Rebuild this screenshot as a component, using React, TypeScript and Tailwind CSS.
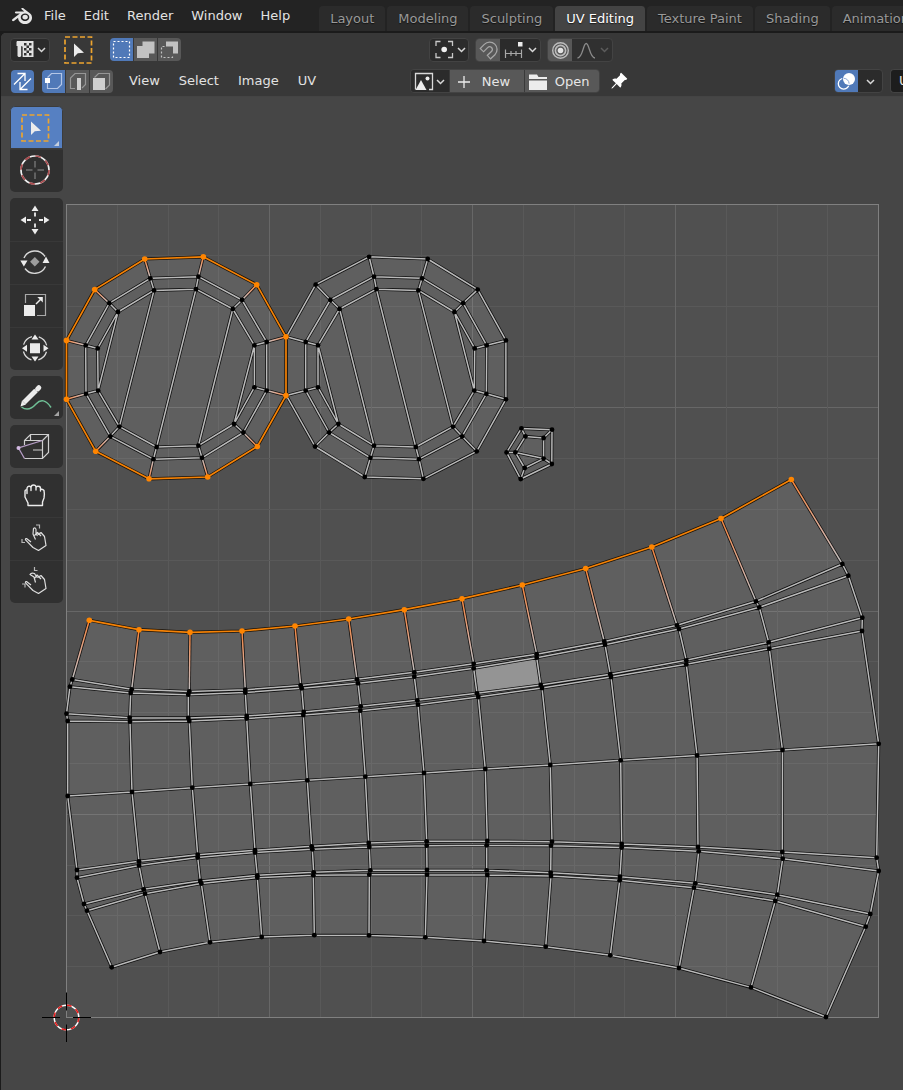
import React from "react";
import { SiBlender } from "react-icons/si";
import { BsPinAngleFill } from "react-icons/bs";

type Pt = [number, number];

/* ---------- UV mesh data (units of the canvas view box) ---------- */

const sheet: Pt[][] = [
  [[89.3, 620.3], [139, 629.7], [190, 632.3], [242, 631], [295, 626], [348.7, 619], [404.3, 609.7], [462, 598.7], [522.3, 585], [585.7, 568.5], [651.8, 547], [721, 518.5], [791.3, 479.5]],
  [[72.3, 679.5], [131.7, 689.3], [189.3, 691.5], [245.3, 689.7], [300.7, 685.5], [357, 679.3], [414.3, 672.3], [473.7, 663.8], [536.7, 654.2], [604.3, 641.5], [677, 625.3], [756, 601.3], [842.3, 564]],
  [[70, 686.7], [130.7, 693], [188.3, 694.7], [245.3, 692.5], [301.7, 688.3], [358, 683.3], [414.3, 676.7], [473.7, 668.3], [536.7, 657.7], [605, 644.7], [679, 629], [759.3, 607.3], [848.3, 575.7]],
  [[66.5, 713.7], [129.7, 717.7], [188.3, 717.9], [246.7, 716], [303.7, 712], [360.7, 706.3], [417.3, 700.3], [477, 693.3], [540.7, 685], [610.3, 674.2], [686.3, 660.3], [768.7, 642.3], [862.3, 617.7]],
  [[67.7, 721], [130, 721.7], [189.3, 721], [246.7, 718.5], [303.3, 715], [360.3, 710.7], [418, 704.7], [478.3, 697], [542, 688], [611, 677], [686.3, 664.3], [769.3, 648.7], [862, 631]],
  [[67.7, 796], [132, 792], [192.3, 787.7], [250.3, 784], [307.3, 780.3], [365.3, 776.7], [424, 773], [485.3, 769], [550.3, 765], [620.7, 760.3], [697.1, 755.5], [782.5, 750], [878.7, 743.8]],
  [[77, 870], [139, 861.3], [197.7, 854.7], [255, 850.2], [311.7, 846.3], [368.7, 843], [426.7, 841.3], [487.3, 841], [552, 841.7], [621.7, 844], [698, 847], [782.3, 852], [876.7, 857.7]],
  [[77, 877.7], [139, 865.5], [197.7, 857.5], [255, 852.5], [312.3, 849.3], [369.3, 847], [426.7, 845.7], [486.7, 845.3], [551, 845.7], [621.7, 847.5], [698.7, 851.3], [782.7, 858.7], [878.7, 871]],
  [[84, 904], [143.7, 889.3], [200.3, 881], [257.3, 875.3], [313.7, 872.3], [370.3, 870.3], [427, 870], [486.7, 870.3], [550.7, 872.7], [620, 876.7], [695.3, 883.3], [777.3, 894.7], [870.3, 914]],
  [[87, 910.7], [145, 893.7], [201.3, 883.5], [257.3, 877.7], [313.3, 875.3], [369.3, 874.7], [427, 874.7], [487.3, 875], [551, 876], [619.7, 880.3], [694, 887.7], [775.3, 901], [865.7, 926.7]],
  [[111.7, 967.3], [160, 952], [210, 942.3], [261.7, 937], [314.3, 935.2], [369, 935.4], [425.3, 937.3], [484, 941], [545.7, 946.7], [610.3, 955.3], [679, 968], [751, 987.4], [826, 1017]],
];

const outer: Pt[] = [[144.7, 259], [203.3, 256.8], [256.7, 284.7], [286, 336.8], [286, 395.6], [257.3, 446.5], [207.7, 477], [149, 478.8], [95.7, 451.3], [66.5, 399.3], [66.5, 340.4], [94.7, 289.6]];
const middle: Pt[] = [[150.3, 278.3], [198.4, 276.7], [242, 300], [266.7, 342], [266.7, 390.6], [243.3, 432.5], [202, 457.8], [153.4, 459.2], [110.3, 436.3], [86, 393.8], [85.7, 345.3], [109.3, 303.2]];
const inner: Pt[] = [[154, 290.4], [196, 289.2], [232.8, 309], [254.4, 345.3], [254.4, 387.3], [234, 424], [198.4, 445.7], [156.6, 447], [119.4, 426.6], [98.1, 390.6], [97.7, 348.4], [118, 312]];
const chords: [number, number][] = [[11, 9], [0, 8], [1, 7], [2, 6], [3, 5]];

const mirror = (ring: Pt[]): Pt[] => ring.map(([x, y]) => [572.4 - x, y]);
const capOuter = mirror(outer);
const capMiddle = mirror(middle);
const capInner = mirror(inner);

const gemOuter: Pt[] = [[521.4, 428.4], [552, 429.7], [551.8, 464], [520.7, 479], [506.6, 452.4]];
const gemInner: Pt[] = [[525.4, 436.4], [543.6, 438], [543.6, 458.6], [524.7, 468], [515.4, 452.4]];

const path = (pts: Pt[], close = false) => "M" + pts.map((p) => p.join(" ")).join("L") + (close ? "Z" : "");
const seg = (a: Pt, b: Pt) => path([a, b]);

const plain: string[] = [
  ...sheet.slice(1).map((r) => path(r)),
  ...sheet[0].map((_, c) => path(sheet.slice(1).map((r) => r[c]))),
  path(middle, true),
  path(inner, true),
  ...middle.map((p, i) => seg(p, inner[i])),
  ...chords.map(([a, b]) => seg(inner[a], inner[b])),
  path(capOuter, true),
  path(capMiddle, true),
  path(capInner, true),
  ...capMiddle.map((p, i) => seg(p, capInner[i])),
  ...capOuter.map((p, i) => seg(p, capMiddle[i])),
  ...chords.map(([a, b]) => seg(capInner[a], capInner[b])),
  path(gemOuter, true),
  path(gemInner, true),
  ...gemOuter.map((p, i) => seg(p, gemInner[i])),
  seg(gemInner[4], gemInner[2]),
];
const plainPath = plain.join("");

const faded: [Pt, Pt][] = [
  ...sheet[0].map((p, c): [Pt, Pt] => [p, sheet[1][c]]),
  ...outer.map((p, i): [Pt, Pt] => [p, middle[i]]),
];
const fadedPath = faded.map(([a, b]) => seg(a, b)).join("");
const selectedPath = path(sheet[0]) + path(outer, true);

const outline: Pt[] = [
  ...sheet[0],
  ...sheet.slice(1).map((r) => r[12]),
  ...[...sheet[10]].reverse(),
  ...sheet.slice(1, 10).map((r) => r[0]).reverse(),
];

const darkDots: Pt[] = [
  ...sheet.slice(1).flat(), ...middle, ...inner, ...capOuter, ...capMiddle, ...capInner, ...gemOuter, ...gemInner,
];
const hotDots: Pt[] = [...sheet[0], ...outer];

const divisions = Array.from({ length: 15 }, (_, i) => i + 1);

function UVCanvas() {
  return (
    <svg viewBox="1 97 902 993" className="block h-auto w-full [grid-area:1/1]" role="img" aria-label="UV layout">
      <rect x="66.5" y="204.5" width="812" height="813" fill="#505050" />
      {divisions.map((i) => (
        <path
          key={i}
          d={`M${Math.floor(66.5 + i * 50.75) + 0.5} 205V1017M67 ${Math.round(204 + i * 50.82) + 0.5}H878`}
          stroke={i % 4 === 0 ? "#676767" : "#595959"}
        />
      ))}
      <g fill="#fff" fillOpacity=".09">
        <path d={path(outline, true)} />
        <path d={path(outer, true)} />
        <path d={path(capOuter, true)} />
        <path d={path(gemOuter, true)} />
      </g>
      <path d={path([sheet[2][7], sheet[2][8], sheet[3][8], sheet[3][7]], true)} fill="#949494" />
      <rect x="66.5" y="204.5" width="812" height="813" fill="none" stroke="#808080" />

      <defs>
        {faded.map(([a, b], i) => (
          <linearGradient key={i} id={`edge${i}`} gradientUnits="userSpaceOnUse" x1={a[0]} y1={a[1]} x2={b[0]} y2={b[1]}>
            <stop offset="0" stopColor="#f5833a" />
            <stop offset=".6" stopColor="#dcae9c" />
            <stop offset="1" stopColor="#bcbcbc" />
          </linearGradient>
        ))}
      </defs>
      <g fill="none" strokeLinejoin="round">
        <path d={plainPath + fadedPath} stroke="#101010" strokeWidth="3.1" />
        <path d={plainPath} stroke="#bababa" strokeWidth="1.5" />
        {faded.map(([a, b], i) => (
          <path key={i} d={seg(a, b)} stroke={`url(#edge${i})`} strokeWidth="1.5" />
        ))}
        <path d={selectedPath} stroke="#1a1208" strokeWidth="3.2" />
        <path d={selectedPath} stroke="#f58206" strokeWidth="1.7" />
      </g>
      {darkDots.map(([x, y], i) => <circle key={i} cx={x} cy={y} r="2.4" fill="#000" />)}
      {hotDots.map(([x, y], i) => <circle key={i} cx={x} cy={y} r="2.8" fill="#ff8500" />)}

      <g fill="none" strokeWidth="1.5">
        <circle cx="66.5" cy="1017.5" r="12.3" stroke="#fff" />
        <circle cx="66.5" cy="1017.5" r="12.3" stroke="#e81c1c" strokeDasharray="4.83 4.83" />
        <path d="M42 1017.5H60M73 1017.5H91M66.5 992.5V1010.5M66.5 1024.5V1042" stroke="#000" strokeWidth="1" />
      </g>
    </svg>
  );
}

/* ---------- Icons ---------- */

function Glyph({ box, w, h, children }: { box: string; w: string; h: string; children: React.ReactNode }) {
  return (
    <svg viewBox={box} width={w} height={h} fill="none" className="block shrink-0" aria-hidden="true">
      {children}
    </svg>
  );
}

function Chevron({ dim = false }: { dim?: boolean }) {
  return (
    <svg viewBox="0 0 9 6" width="9" height="6" fill="none" className="block shrink-0" aria-hidden="true">
      <path d="M1 1L4.5 4.5L8 1" stroke={dim ? "#5c5c5c" : "#d8d8d8"} strokeWidth="1.5" />
    </svg>
  );
}

const selectBox = (
  <>
    <path d="M22 115H48.5V141H22Z" stroke="#eda42f" strokeWidth="1.7" strokeDasharray="5 2.5" />
    <path d="M31 121.5V135L34.8 131.3L41 130.7Z" fill="#ececec" />
  </>
);

type Tool = { name: string; box: string; art: React.ReactNode; active?: boolean };

const toolGroups: Tool[][] = [
  [
    { name: "Select Box", box: "10 106 53 43", active: true, art: <>{selectBox}<path d="M59 141V146H54Z" fill="#c5cfdf" /></> },
    {
      name: "Cursor", box: "10 149 53 43",
      art: (
        <>
          <circle cx="35" cy="170" r="14" stroke="#f0f0f0" strokeWidth="1.7" />
          <circle cx="35" cy="170" r="14" stroke="#a84a4d" strokeWidth="1.7" strokeDasharray="5.5 5.5" />
          <path d="M26 170H32.5M37.5 170H44M35 161V167.5M35 172.5V179" stroke="#909090" />
        </>
      ),
    },
  ],
  [
    {
      name: "Move", box: "10 198 53 43",
      art: (
        <>
          <path d="M35 205.5L38.5 211H31.5ZM35 234.5L38.5 229H31.5ZM20.5 220L26 216.5V223.5ZM49.5 220L44 216.5V223.5Z" fill="#ececec" />
          <path d="M35 212.5V216.5M35 223.5V227.5M27 220H31M39 220H43" stroke="#ececec" strokeWidth="1.8" />
        </>
      ),
    },
    {
      name: "Rotate", box: "10 241 53 43",
      art: (
        <>
          <path d="M24 258A12 12 0 0 1 45 256.5M45.5 266.5A12 12 0 0 1 25 268.5" stroke="#d8d8d8" strokeWidth="1.4" />
          <path d="M20.3 260.5H27.5L23.9 266.5ZM42.5 263H49.5L46 256.5Z" fill="#ececec" />
          <path d="M34.8 257L39.5 261.7L34.8 266.4L30.1 261.7Z" fill="#9c9c9c" />
        </>
      ),
    },
    {
      name: "Scale", box: "10 284 53 43",
      art: (
        <>
          <path d="M25.5 303V294.5H45.5V315.5H37" stroke="#a8a8a8" strokeWidth="1.2" />
          <path d="M24 305H35V316H24Z" fill="#ececec" />
          <path d="M36 304L40.5 299.5" stroke="#ececec" strokeWidth="1.5" />
          <path d="M42.8 297V302.5L37.3 297Z" fill="#ececec" />
        </>
      ),
    },
    {
      name: "Transform", box: "10 327 53 43",
      art: (
        <>
          <circle cx="35" cy="348.3" r="12" stroke="#d8d8d8" strokeWidth="1.3" strokeDasharray="11.85 7" strokeDashoffset="-3.5" />
          <path d="M30 343.3H40V353.3H30Z" fill="#ececec" />
          <path d="M35 334.5L38.5 339.5H31.5ZM35 361.5L38.5 356.5H31.5ZM22 348.3L27 344.8V351.8ZM48.5 348.3L43.5 344.8V351.8Z" fill="#ececec" />
        </>
      ),
    },
  ],
  [
    {
      name: "Annotate", box: "10 376 53 43",
      art: (
        <>
          <path d="M21.5 407C27 411 31.5 409 36 404S46 399.5 51 407.5" stroke="#6fbf95" strokeWidth="1.5" />
          <path d="M24 402.5L36 390.5" stroke="#ececec" strokeWidth="5" />
          <path d="M37.6 388.9L38.8 387.7" stroke="#ececec" strokeWidth="5" strokeLinecap="round" />
          <path d="M22 400.5L26 404.5L20.5 406.5Z" fill="#ececec" />
          <path d="M59 411V416H54Z" fill="#a4a4a4" />
        </>
      ),
    },
  ],
  [
    {
      name: "Rip Region", box: "10 425 53 43",
      art: (
        <>
          <path d="M24.5 445V440.5L30.5 434.5H48.5V452.5L42.5 458.5H24.5M24.5 440.5H42.5V458.5M42.5 440.5L48.5 434.5M30.5 434.5V440M33 450H42" stroke="#cfcfcf" strokeWidth="1.2" />
          <path d="M42.5 440.5L18.5 448L24.5 458.5" stroke="#b49bc4" strokeWidth="1.3" />
          <circle cx="18.5" cy="448" r="2" fill="#d3b9e2" />
        </>
      ),
    },
  ],
  [
    {
      name: "Grab", box: "10 474 53 43",
      art: (
        <path
          d="M28 505.5V503L25 497V491.5Q25 489.5 27 490V493.5V488.5Q27.3 486 29.5 486.3Q31 486.5 31 488V490.5V487.5Q31.2 485 33.5 485Q35.8 485 36 487V490V487.5Q36.8 485.8 38.5 486.3Q40.5 486.5 40.5 488.5V491V489.5Q42.5 488.5 44 490.5Q44.8 494 44 498L42.5 502V505.5Z"
          stroke="#ececec" strokeWidth="1.4" strokeLinejoin="round"
        />
      ),
    },
    {
      name: "Relax", box: "10 517 53 43",
      art: (
        <>
          <path
            d="M31 542L26.5 538.5Q25.3 538.3 25.5 539.8L33 547.5L38.5 550.5L46 545.5L44.5 536.5L41 532.5L37.5 534.5M41 536L37.5 532.5L34.5 535.5M37.5 536L36 534V529.5Q35.5 527 33.5 528.5L33 534L35.5 539.5"
            stroke="#dedede" strokeWidth="1.2" strokeLinejoin="round"
          />
          <path d="M36 525H39.5V528.5M22 539V542.5H25" stroke="#b8b8b8" strokeWidth="1.2" />
        </>
      ),
    },
    {
      name: "Pinch", box: "10 560 53 43",
      art: (
        <>
          <path
            d="M31 585L26.5 581.5Q25.3 581.3 25.5 582.8L33 590.5L38.5 593.5L46 588.5L44.5 579.5L41 575.5L37.5 577.5M41 579L37 575L34.5 578.5M37 577.5L34.5 573.5Q31 572.5 30 574.5L34 577L35.5 582.5"
            stroke="#dedede" strokeWidth="1.2" strokeLinejoin="round"
          />
          <path d="M34.5 567V570.5H37.5M22 584H25V587.5" stroke="#b8b8b8" strokeWidth="1.2" />
        </>
      ),
    },
  ],
];

/* ---------- Chrome ---------- */

const shadow = "[text-shadow:0_1px_1px_rgba(0,0,0,0.6)]";
const drop = "flex h-6 shrink-0 items-center rounded-[4px] border border-[#434343] bg-[#2b2b2b]";
const cell = "flex h-[23px] shrink-0 items-center justify-center";

function TopBar() {
  const tabs = ["Layout", "Modeling", "Sculpting", "UV Editing", "Texture Paint", "Shading", "Animation"];
  return (
    <header className="flex h-[33px] items-start overflow-hidden border-b-2 border-[#1b1b1b] bg-[#232323] pl-3">
      <button aria-label="Blender" className="mt-[6px] text-[#e6e6e6]"><SiBlender size={20} /></button>
      <nav className={`flex h-[31px] shrink-0 items-center gap-[18px] pl-3 text-[#e2e2e2] ${shadow}`}>
        {["File", "Edit", "Render", "Window", "Help"].map((m) => <button key={m}>{m}</button>)}
      </nav>
      <div className="ml-[29px] flex h-[31px] items-end gap-px" role="tablist">
        {tabs.map((t) => (
          <button
            key={t}
            role="tab"
            aria-selected={t === "UV Editing"}
            className={`h-[25px] shrink-0 rounded-t-[4px] border-r border-[#232323] px-[11px] ${shadow} ${t === "UV Editing" ? "bg-[#444444] text-white" : "bg-[#2b2b2b] text-[#999999]"}`}
          >
            {t}
          </button>
        ))}
      </div>
    </header>
  );
}

function ToolSettings() {
  return (
    <div className="flex h-[33px] items-center pl-[9px]">
      <button aria-label="Editor type" className={`${drop} w-10 gap-[2px] pl-1`}>
        <Glyph box="15 40 20 19" w="20" h="19">
          <path d="M17 41H33.5V57H22.5V47H21.5V56L20 57H18.5L17.5 56V46H16.5V42Z" fill="#e3e3e3" />
          <path d="M24 43H26.5V45.5H24ZM29 43H31.5V45.5H29ZM26.5 45.5H29V48H26.5ZM24 48H26.5V50.5H24ZM29 48H31.5V50.5H29ZM26.5 50.5H29V53H26.5ZM24 53H26.5V55.5H24ZM29 53H31.5V55.5H29Z" fill="#333" />
          <path d="M21.8 46V57" stroke="#333" />
        </Glyph>
        <Chevron />
      </button>
      <button aria-label="Active tool" className="ml-[13px] shrink-0">
        <Glyph box="20 114 30 28" w="30" h="28">{selectBox}</Glyph>
      </button>
      <div className="ml-[17px] flex gap-px overflow-hidden rounded-[4px]">
        <button aria-label="Set selection" className={`${cell} w-[23px] bg-[#5079b8]`}>
          <Glyph box="110 38 23 23" w="23" h="23">
            <path d="M113.5 41.5H129.5V57.5H113.5Z" stroke="#fff" strokeDasharray="2 2" strokeWidth="1.2" />
          </Glyph>
        </button>
        <button aria-label="Extend selection" className={`${cell} w-[23px] bg-[#585858]`}>
          <Glyph box="134 38 23 23" w="23" h="23">
            <path d="M142.5 41.5H154.5V53.5H149V58H137V46H142.5Z" fill="#c2c2c2" />
          </Glyph>
        </button>
        <button aria-label="Subtract selection" className={`${cell} w-[23px] bg-[#585858]`}>
          <Glyph box="158 38 23 23" w="23" h="23">
            <path d="M166 41.5H178V53.5H173V46.5H166Z" fill="#c2c2c2" />
            <path d="M164.5 46.5H161.5V57.5H172.5V54.5" stroke="#c2c2c2" strokeDasharray="2 2" strokeWidth="1.2" />
          </Glyph>
        </button>
      </div>
      <div className="grow-6" />
      <button aria-label="Pivot point" className={`${drop} w-10 gap-[3px] pl-1`}>
        <Glyph box="435 40 20 19" w="20" h="19">
          <path d="M441.5 41.5H437V46M449 41.5H453.500V46M437 53V57.5H441.5M453.500 53V57.5H449" stroke="#c8c8c8" strokeWidth="1.3" />
          <circle cx="445.2" cy="49.5" r="2.8" fill="#f0f0f0" />
        </Glyph>
        <Chevron />
      </button>
      <div className="ml-[6px] flex h-6 shrink-0 overflow-hidden rounded-[4px] border border-[#434343] bg-[#2b2b2b]">
        <button aria-label="Snap" className={`${cell} w-6 bg-[#585858]`}>
          <Glyph box="477 38 23 23" w="23" h="23">
            <path d="M481.5 49.5L486 45A5 5 0 0 1 493.3 52L488.5 56.5" stroke="#a6a6a6" strokeWidth="6" />
            <path d="M482.3 48.7L486 45A5 5 0 0 1 493.3 52L489.3 55.700" stroke="#585858" strokeWidth="3.4" />
          </Glyph>
        </button>
        <button aria-label="Snap to" className={`${cell} w-10 gap-1`}>
          <Glyph box="503 39 20 21" w="20" h="21">
            <path d="M517 41H521.5V45.5H517Z" fill="#ececec" />
            <path d="M504.5 52.5H520.5M504.5 48.5V57M520.5 48.5V57M510 50V55M515 50V55" stroke="#a8a8a8" strokeWidth="1.2" />
          </Glyph>
          <Chevron />
        </button>
      </div>
      <div className="ml-[6px] flex h-6 shrink-0 overflow-hidden rounded-[4px] border border-[#434343] bg-[#303030]">
        <button aria-label="Proportional editing" className={`${cell} w-6 bg-[#585858]`}>
          <Glyph box="548 38 23 23" w="23" h="23">
            <circle cx="559.5" cy="49.5" r="7.8" stroke="#bcbcbc" strokeWidth="1.4" />
            <circle cx="559.5" cy="49.5" r="5.1" stroke="#bcbcbc" strokeWidth="1.6" />
            <circle cx="559.5" cy="49.5" r="2.8" fill="#e2e2e2" />
          </Glyph>
        </button>
        <button aria-label="Falloff" className={`${cell} w-10 gap-1`}>
          <Glyph box="576 39 20 21" w="20" h="21">
            <path d="M577.5 57C583 56.5 583 42.5 586.2 42.5S589.5 56.5 595 57" stroke="#8a8a8a" strokeWidth="1.3" />
          </Glyph>
          <Chevron dim />
        </button>
      </div>
      <div className="grow-7" />
    </div>
  );
}

function EditorHeader() {
  return (
    <div className="flex h-[30px] items-center overflow-hidden pl-[10px]">
      <button aria-label="Sync selection" className={`${cell} w-[23px] rounded-[4px] bg-[#5079b8]`}>
        <Glyph box="11 70 23 23" w="23" h="23">
          <path d="M14 84.5L25 73.5M17.5 73.5H25V81M31 78.5L20 89.5M20 82V89.5H27.5" stroke="#fff" strokeWidth="1.3" />
        </Glyph>
      </button>
      <div className="ml-2 flex shrink-0 gap-px overflow-hidden rounded-[4px]">
        <button aria-label="Vertex select" className={`${cell} w-[23px] bg-[#5079b8]`}>
          <Glyph box="42 70 23 23" w="23" h="23">
            <path d="M47.5 77.5L51.5 73.5H61.5V84.5L57.5 88.5H47.5V83" stroke="#b4c6e6" strokeWidth="1.2" />
            <path d="M45 78H50V83H45Z" fill="#fff" />
          </Glyph>
        </button>
        <button aria-label="Edge select" className={`${cell} w-[23px] bg-[#585858]`}>
          <Glyph box="66 70 23 23" w="23" h="23">
            <path d="M75 88.5H70.5V78L75 73.5H85.5V84.5L82 88" stroke="#969696" strokeWidth="1.2" />
            <path d="M77 78H81V90H77Z" fill="#cfcfcf" />
          </Glyph>
        </button>
        <button aria-label="Face select" className={`${cell} w-[23px] bg-[#585858]`}>
          <Glyph box="90 70 23 23" w="23" h="23">
            <path d="M94.5 77.5L98.5 73.5H109.5V85L105.5 89" stroke="#969696" strokeWidth="1.2" />
            <path d="M93 78H105V90H93Z" fill="#cfcfcf" />
          </Glyph>
        </button>
      </div>
      <nav className={`ml-4 flex shrink-0 gap-[19px] text-[#e2e2e2] ${shadow}`}>
        {["View", "Select", "Image", "UV"].map((m) => <button key={m}>{m}</button>)}
      </nav>
      <div className="grow-5" />
      <div className={`flex h-6 shrink-0 gap-px overflow-hidden rounded-[4px] border border-[#434343] bg-[#3a3a3a] text-[#e6e6e6] ${shadow}`}>
        <button aria-label="Browse image" className={`${cell} w-[38px] gap-[2px] bg-[#2b2b2b]`}>
          <Glyph box="415 72 20 19" w="20" h="19">
            <path d="M430 89.5H433.5V73.5H416.5V89.5" stroke="#d8d8d8" strokeWidth="1.3" />
            <path d="M416.5 90L422 80L427.5 90Z" fill="#ececec" />
            <circle cx="428.5" cy="78.5" r="2" fill="#ececec" />
          </Glyph>
          <Chevron />
        </button>
        <button className="flex h-[23px] w-[74px] shrink-0 items-center gap-3 bg-[#585858] pl-2">
          <Glyph box="0 0 12 12" w="12" h="12"><path d="M6 0V12M0 6H12" stroke="#ececec" strokeWidth="1.3" /></Glyph>
          New
        </button>
        <button className="flex h-[23px] w-[74px] shrink-0 items-center gap-2 bg-[#585858] pl-1">
          <Glyph box="530 73 18 17" w="18" h="17">
            <path d="M530 74.5H538L539.5 77H548V79H530ZM530 80.5H548V90H530Z" fill="#ececec" />
          </Glyph>
          Open
        </button>
      </div>
      <button aria-label="Pin" className="ml-[10px] shrink-0 text-white"><BsPinAngleFill size={18} /></button>
      <div className="grow-11" />
      <div className="flex h-6 shrink-0 overflow-hidden rounded-[4px] border border-[#434343] bg-[#2b2b2b]">
        <button aria-label="Show overlays" className={`${cell} w-[23px] bg-[#5079b8]`}>
          <Glyph box="835 70 23 23" w="23" h="23">
            <circle cx="843.7" cy="83.7" r="5.4" stroke="#fff" strokeWidth="1.3" />
            <circle cx="849" cy="79" r="6.8" fill="#5079b8" />
            <circle cx="849" cy="79" r="6" fill="#fff" />
            <path d="M843.7 78.3A5.4 5.4 0 0 1 849.1 83.7" stroke="#8ea9d6" />
          </Glyph>
        </button>
        <button aria-label="Overlay options" className={`${cell} w-6`}><Chevron /></button>
      </div>
      <button aria-label="UV map" className="ml-[7px] h-6 w-[13px] shrink-0 overflow-hidden rounded-l-[4px] border-y border-l border-[#434343] bg-[#1d1d1d] pl-2 text-left text-[#e2e2e2]">
        U
      </button>
    </div>
  );
}

function Toolbar() {
  return (
    <aside className="z-10 flex flex-col gap-[6px] self-start justify-self-start pt-[9px] pl-[9px] [grid-area:1/1]">
      {toolGroups.map((group, g) => (
        <div key={g} className="flex flex-col overflow-hidden rounded-[5px] bg-[#303030]">
          {group.map((tool, i) => (
            <button
              key={tool.name}
              aria-label={tool.name}
              aria-pressed={!!tool.active}
              className={`${tool.active ? "rounded-t-[5px] bg-[#5680c2] shadow-[inset_0_0_0_1px_#3c3c3c]" : i > 0 ? "shadow-[inset_0_1px_0_#383838]" : ""}`}
            >
              <Glyph box={tool.box} w="53" h="43">{tool.art}</Glyph>
            </button>
          ))}
        </div>
      ))}
    </aside>
  );
}

export default function App() {
  return (
    <div className="min-h-screen overflow-hidden bg-[#1b1b1b] font-['DejaVu_Sans',sans-serif] text-[13px] leading-[18px]">
      <TopBar />
      <main className="ml-px min-h-[calc(100vh-33px)] overflow-hidden rounded-tl-[5px] bg-[#464646]">
        <div className="border-b border-[#444444] bg-[#383838]">
          <ToolSettings />
          <EditorHeader />
        </div>
        <div className="grid">
          <UVCanvas />
          <Toolbar />
        </div>
      </main>
    </div>
  );
}
